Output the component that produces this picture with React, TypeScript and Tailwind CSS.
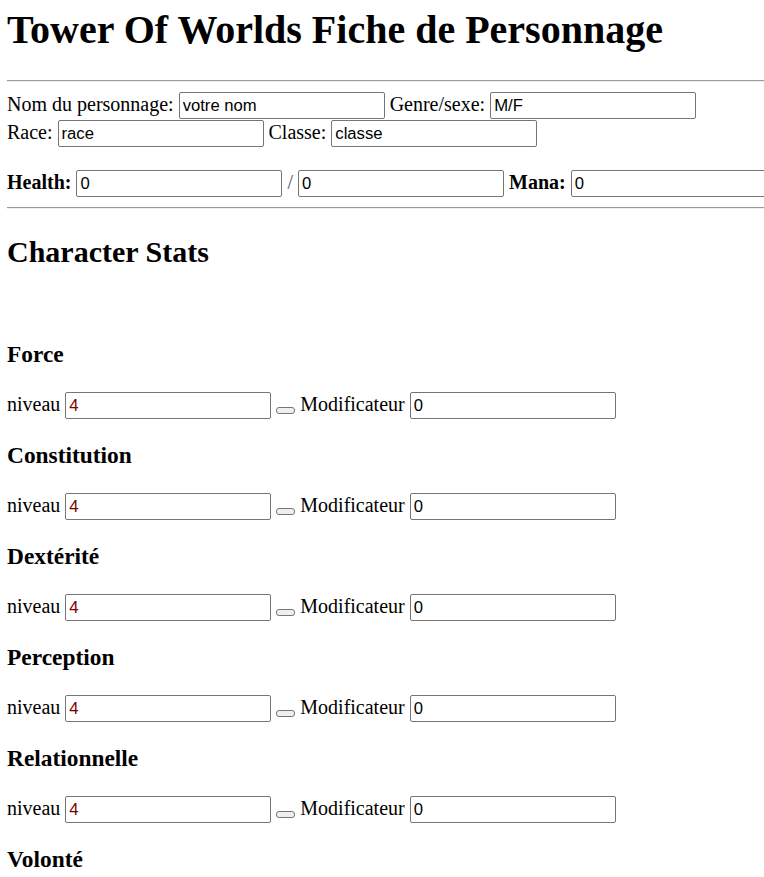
import React from "react";

const inputCls =
  "inline-block w-[206px] h-[27px] border border-[#767676] rounded-[2px] px-[3px] bg-white text-black font-['Liberation_Sans',Arial,sans-serif] text-[16.67px] align-baseline";

function Field({ value, red }: { value: string; red?: boolean }) {
  return (
    <input
      type="text"
      defaultValue={value}
      className={red ? inputCls.replace("text-black", "text-[#7a0000]") : inputCls}
    />
  );
}

const stats = ["Force", "Constitution", "Dextérité", "Perception", "Relationnelle"];

function StatRow() {
  return (
    <div className="h-[27px] whitespace-nowrap">
      niveau <Field value="4" red />{" "}
      <button
        type="button"
        className="inline-block w-[19px] h-[7px] bg-[#efefef] border border-[#767676] rounded-[3px] align-[-2px]"
      />{" "}
      Modificateur <Field value="0" />
    </div>
  );
}

export default function App() {
  return (
    <div className="h-[877px] w-[764px] overflow-hidden bg-white">
      <div className="pt-2 pl-[7px] font-['Liberation_Serif','Times_New_Roman',serif] text-[20px] leading-[23px] text-black">
        <h1 className="text-[40px] font-bold leading-[44px] whitespace-nowrap">
          Tower Of Worlds Fiche de Personnage
        </h1>
        <div className="mt-[28px] h-0 border-t border-b border-t-[#9a9a9a] border-b-[#eeeeee]" />
        <div className="mt-[10px] h-[28px] whitespace-nowrap">
          Nom du personnage:{" "}
          <Field value="votre nom" /> Genre/sexe: <Field value="M/F" />
        </div>
        <div className="h-[28px] whitespace-nowrap">
          Race: <Field value="race" /> Classe: <Field value="classe" />
        </div>
        <div className="mt-[22px] h-[27px] whitespace-nowrap">
          <b className="font-bold">Health:</b> <Field value="0" /> <span className="text-[#555]">/</span>{" "}
          <Field value="0" /> <b className="font-bold">Mana:</b> <Field value="0" />
        </div>
        <div className="mt-[10px] h-0 border-t border-b border-t-[#9a9a9a] border-b-[#eeeeee]" />
        <h2 className="mt-[25px] mb-[72px] text-[30px] font-bold leading-[35px]">Character Stats</h2>
        {stats.map((s) => (
          <div key={s} className="mb-[23px]">
            <h3 className="text-[23.4px] font-bold leading-[27px] mb-[24px]">{s}</h3>
            <StatRow />
          </div>
        ))}
        <h3 className="text-[23.4px] font-bold leading-[27px]">Volonté</h3>
      </div>
    </div>
  );
}
